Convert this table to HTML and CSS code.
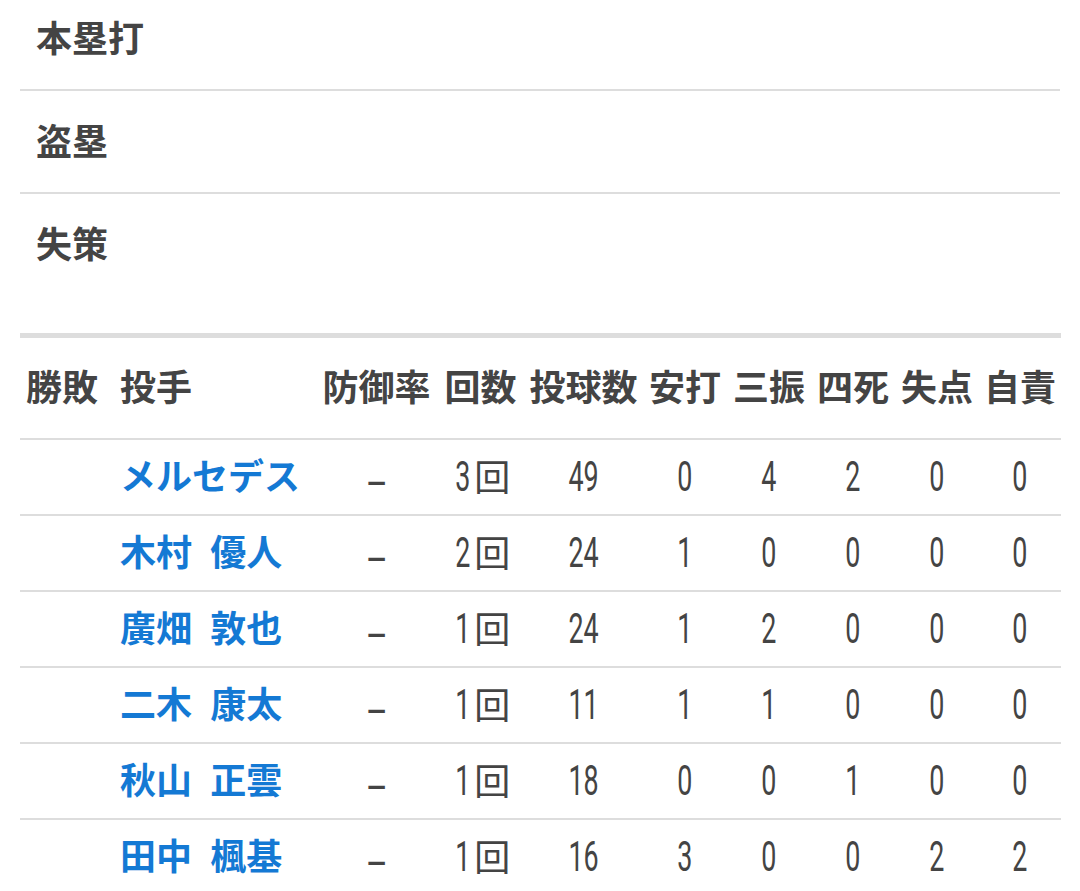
FILE: index.html
```html
<!DOCTYPE html>
<html lang="ja">
<head>
    <meta charset="UTF-8">
    <meta name="viewport" content="width=device-width, initial-scale=1.0">
    <title>投手成績</title>
    <link rel="stylesheet" href="styles.css">
</head>
<body>
    <div class="stats">
        <div class="stat-row"><span class="stat-label">本塁打</span></div>
        <div class="stat-row"><span class="stat-label">盗塁</span></div>
        <div class="stat-row"><span class="stat-label">失策</span></div>
    </div>

    <table class="pitchers">
        <colgroup>
            <col class="c-result">
            <col class="c-name">
            <col class="c-era">
            <col class="c-inn">
            <col class="c-pitches">
            <col class="c-sm">
            <col class="c-sm">
            <col class="c-sm">
            <col class="c-sm">
            <col class="c-last">
        </colgroup>
        <thead>
            <tr>
                <th class="left">勝敗</th>
                <th class="left">投手</th>
                <th>防御率</th>
                <th>回数</th>
                <th>投球数</th>
                <th>安打</th>
                <th>三振</th>
                <th>四死</th>
                <th>失点</th>
                <th>自責</th>
            </tr>
        </thead>
        <tbody>
            <tr>
                <td></td>
                <td class="name"><a href="#">メルセデス</a></td>
                <td><span class="num dash">–</span></td>
                <td><span class="num">3</span>回</td>
                <td><span class="num">49</span></td>
                <td><span class="num">0</span></td>
                <td><span class="num">4</span></td>
                <td><span class="num">2</span></td>
                <td><span class="num">0</span></td>
                <td><span class="num">0</span></td>
            </tr>
            <tr>
                <td></td>
                <td class="name"><a href="#">木村 優人</a></td>
                <td><span class="num dash">–</span></td>
                <td><span class="num">2</span>回</td>
                <td><span class="num">24</span></td>
                <td><span class="num">1</span></td>
                <td><span class="num">0</span></td>
                <td><span class="num">0</span></td>
                <td><span class="num">0</span></td>
                <td><span class="num">0</span></td>
            </tr>
            <tr>
                <td></td>
                <td class="name"><a href="#">廣畑 敦也</a></td>
                <td><span class="num dash">–</span></td>
                <td><span class="num">1</span>回</td>
                <td><span class="num">24</span></td>
                <td><span class="num">1</span></td>
                <td><span class="num">2</span></td>
                <td><span class="num">0</span></td>
                <td><span class="num">0</span></td>
                <td><span class="num">0</span></td>
            </tr>
            <tr>
                <td></td>
                <td class="name"><a href="#">二木 康太</a></td>
                <td><span class="num dash">–</span></td>
                <td><span class="num">1</span>回</td>
                <td><span class="num">11</span></td>
                <td><span class="num">1</span></td>
                <td><span class="num">1</span></td>
                <td><span class="num">0</span></td>
                <td><span class="num">0</span></td>
                <td><span class="num">0</span></td>
            </tr>
            <tr>
                <td></td>
                <td class="name"><a href="#">秋山 正雲</a></td>
                <td><span class="num dash">–</span></td>
                <td><span class="num">1</span>回</td>
                <td><span class="num">18</span></td>
                <td><span class="num">0</span></td>
                <td><span class="num">0</span></td>
                <td><span class="num">1</span></td>
                <td><span class="num">0</span></td>
                <td><span class="num">0</span></td>
            </tr>
            <tr>
                <td></td>
                <td class="name"><a href="#">田中 楓基</a></td>
                <td><span class="num dash">–</span></td>
                <td><span class="num">1</span>回</td>
                <td><span class="num">16</span></td>
                <td><span class="num">3</span></td>
                <td><span class="num">0</span></td>
                <td><span class="num">0</span></td>
                <td><span class="num">2</span></td>
                <td><span class="num">2</span></td>
            </tr>
        </tbody>
    </table>
</body>
</html>
```

FILE: styles.css
```css
body {
    font-family: "Noto Sans CJK JP", "Noto Sans", sans-serif;
    color: #444;
    margin: 0;
    padding: 0 20px;
    background: #fff;
}
.stats {
    margin-top: -12px;
}
.stat-row {
    height: 95px;
    display: flex;
    align-items: center;
    padding: 0 0 6px 16px;
    border-bottom: 2px solid #ddd;
}
.stat-row:last-child {
    border-bottom: none;
}
.stat-label {
    font-size: 36px;
    font-weight: bold;
    line-height: 1;
}
.pitchers {
    width: 1040px;
    table-layout: fixed;
    border-collapse: collapse;
    margin-top: 38px;
    border-top: 5px solid #ddd;
}
.c-result { width: 94px; }
.c-name { width: 202px; }
.c-era { width: 121px; }
.c-inn { width: 87px; }
.c-pitches { width: 119px; }
.c-sm { width: 84px; }
.c-last { width: 82px; }
.pitchers thead tr {
    height: 100px;
}
.pitchers th {
    height: 94px;
    padding: 0 0 6px;
    font-size: 36px;
    font-weight: bold;
    line-height: 1;
    text-align: center;
    vertical-align: middle;
    white-space: nowrap;
    border-bottom: 2px solid #ddd;
}
.pitchers th.left {
    text-align: left;
    padding-left: 6px;
}
.pitchers td {
    height: 74px;
    padding: 0;
    font-size: 36px;
    line-height: 1;
    text-align: center;
    vertical-align: middle;
    white-space: nowrap;
    border-bottom: 2px solid #ddd;
}
.pitchers td.name {
    text-align: left;
    padding-left: 6px;
    word-spacing: 10px;
}
.name a {
    position: relative;
    top: -3px;
    color: #1479d4;
    font-weight: bold;
    text-decoration: none;
}
.num {
    display: inline-block;
    font-family: Roboto, "Liberation Sans", sans-serif;
    font-size: 42px;
    font-weight: 400;
    transform: scaleX(0.64);
}
.num.dash {
    transform: translateY(8px) scaleX(0.8);
}
```
